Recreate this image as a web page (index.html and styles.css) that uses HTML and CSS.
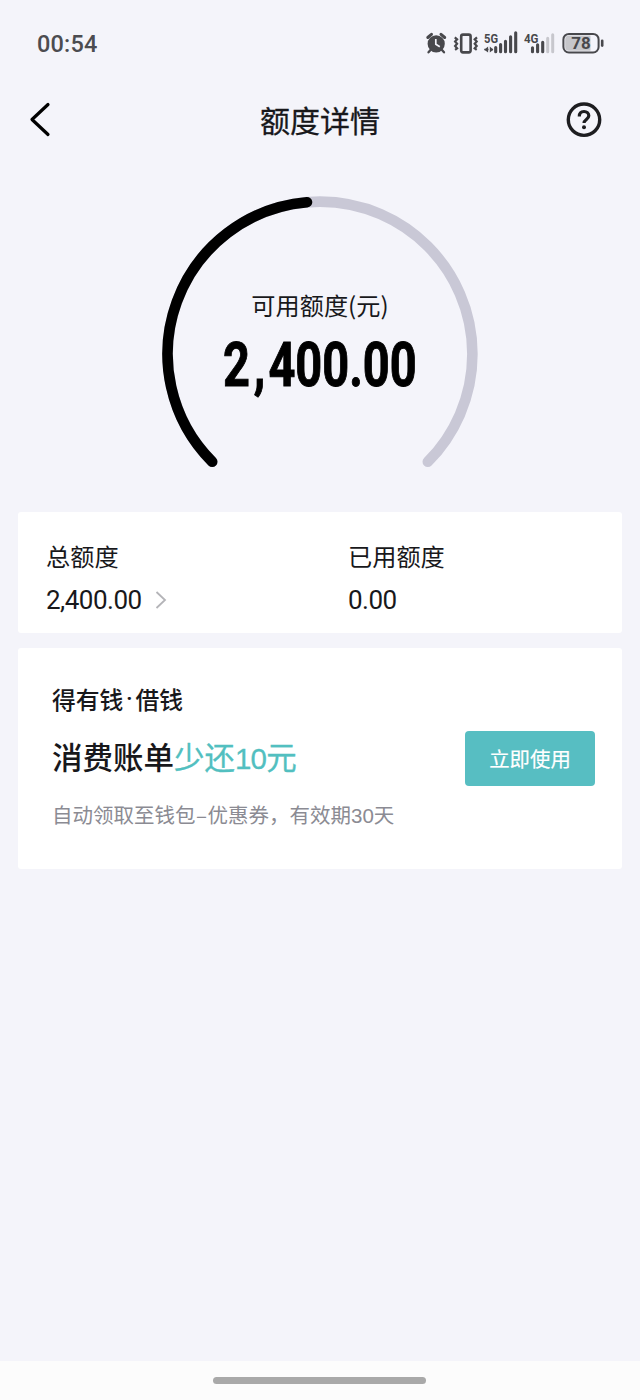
FILE: index.html
```html
<!DOCTYPE html>
<html lang="zh-CN">
<head>
<meta charset="utf-8">
<title>额度详情</title>
<link rel="stylesheet" href="styles.css">
</head>
<body>
<div class="screen">
  <div class="status">
    <span class="clock">00:54</span>
    <svg class="status-icons" width="184" height="28" viewBox="424 29 184 28" fill="none" stroke="#48484c">
      <circle cx="436.200" cy="43.800" r="8.600" fill="#48484c" stroke="none"/>
      <path d="M427.800 37.500l3.700-3.200M444.700 37.500l-3.700-3.200" stroke-width="3" stroke-linecap="round"/>
      <path d="M430.500 50l-2 2.300M442 50l2 2.300" stroke-width="2.300" stroke-linecap="round"/>
      <path d="M435.800 39v5.200l4 2.500" stroke="#f4f4fb" stroke-width="1.700"/>
      <rect x="461.200" y="34.600" width="9.400" height="17.800" rx="1.800" stroke-width="2.600"/>
      <path d="M454.800 37.300l2.300 2-2 2.200 2 2.300-2 2.300 2 2.200-2 1.500M477 37.300l-2.300 2 2 2.200-2 2.300 2 2.300-2 2.200 2 1.500" stroke-width="2.200"/>
      <text class="net" x="484" y="42.500" textLength="14" lengthAdjust="spacingAndGlyphs">5G</text>
      <path d="M484.300 49.500h4.200M490 49.500h3" stroke-width="1.500"/>
      <path d="M484.300 49.700l3.800-3.200v6zM493.300 49.700l-3.500-3.200v6z" fill="#48484c" stroke="none"/>
      <path d="M495.700 52.300v-4.300M500.600 52.300v-7.300M505.500 52.300v-10.500M510.600 52.300v-15M515.700 52.300v-19" stroke-width="3.100" stroke-linecap="round" transform="translate(0 -.5)"/>
      <text class="net" x="524" y="42.500" textLength="14.500" lengthAdjust="spacingAndGlyphs">4G</text>
      <path d="M532.500 51.800v-4M537.600 51.800v-7M542.700 51.800v-9.500" stroke-width="3.100" stroke-linecap="round"/>
      <path d="M547.700 51.800v-13.500M552.700 51.800v-17" stroke="#c7c7cd" stroke-width="3" stroke-linecap="round"/>
      <rect x="563.400" y="33.900" width="35.200" height="18.600" rx="5.500" fill="#f4f4fb" stroke-width="2"/>
      <path d="M569 35.600h21.500v15.200h-21.500a3.800 3.800 0 0 1-3.800-3.800v-7.600a3.800 3.800 0 0 1 3.800-3.800z" fill="#c6c6ca" stroke="none"/>
      <path d="M602.200 40.800v4.800" stroke-width="2.600" stroke-linecap="round"/>
      <text class="battery" x="571.300" y="49.400" textLength="19.500" lengthAdjust="spacingAndGlyphs">78</text>
    </svg>
  </div>
  <header class="nav">
    <svg width="24" height="38" viewBox="0 0 24 38" fill="none" stroke="#000" stroke-width="3.200" stroke-linecap="round" stroke-linejoin="round"><path d="M20 3.500L4 18.500l16 15"/></svg>
    <h1 class="title">额度详情</h1>
    <svg width="38" height="38" viewBox="0 0 38 38" fill="none" stroke="#1d1d20"><circle cx="19" cy="18.700" r="15.700" stroke-width="3.400"/><path d="M14.300 15.500c0-3.300 1.900-5 4.700-5s4.800 1.600 4.800 4.200c0 3.500-4.800 3.900-4.800 7.300" stroke-width="3.200"/><circle cx="19" cy="26.200" r="2" fill="#1d1d20" stroke="none"/></svg>
  </header>
  <section class="gauge">
    <svg class="dial" width="320" height="280" viewBox="160 194 320 280" fill="none" stroke-width="10.600" stroke-linecap="round">
      <path d="M212.200 461.800A152.400 152.400 0 1 1 427.800 461.800" stroke="#c9c8d6"/>
      <path d="M212.200 461.800A152.400 152.400 0 0 1 307 202.200" stroke="#000"/>
    </svg>
    <div class="reading">
      <span class="label">可用额度(元)</span>
      <strong class="amount">2<span class="comma">,</span>400.00</strong>
    </div>
  </section>
  <section class="card totals">
    <div class="total">
      <div class="label">总额度</div>
      <div class="value"><span>2,400.00</span><svg width="12" height="20" viewBox="0 0 12 20" fill="none" stroke="#b4b4b8" stroke-width="1.800"><path d="M1.500 2l8.500 8-8.500 8"/></svg></div>
    </div>
    <div class="total">
      <div class="label">已用额度</div>
      <div class="value"><span>0.00</span></div>
    </div>
  </section>
  <section class="card promo">
    <div class="brand">得有钱<span class="dot">·</span>借钱</div>
    <div class="offer">
      <div class="headline">消费账单<span class="accent">少还<span class="ten">10</span>元</span></div>
      <button class="use">立即使用</button>
    </div>
    <div class="note">自动领取至钱包<span class="dash">–</span>优惠券，有效期<span class="days">30</span>天</div>
  </section>
  <footer class="home"><div class="handle"></div></footer>
</div>
</body>
</html>
```
FILE: styles.css
```css
* { box-sizing: border-box; }
body { margin: 0; background: #f4f4fa; font-family: "Noto Sans CJK SC", sans-serif; color: #18181b; }
.screen { width: 640px; height: 1400px; display: flex; flex-direction: column; }
.status { height: 86px; padding: 0 32px 0 37px; display: flex; align-items: center; justify-content: space-between; }
.clock { font: 500 23.5px/28px Roboto, sans-serif; letter-spacing: .2px; color: #4c4c50; padding-top: 1px; }
.net { font: 700 12px Roboto, sans-serif; fill: #48484c; stroke: none; }
.battery { font: 700 17px Roboto, sans-serif; fill: #48484c; stroke: none; }
.nav { height: 68px; padding: 0 37px 0 28px; display: flex; align-items: center; justify-content: space-between; }
.title { margin: 0 0 3px 23px; font-size: 30px; font-weight: 400; line-height: 44px; -webkit-text-stroke: .3px #18181b; }
.gauge { height: 358px; padding-top: 40px; display: grid; justify-items: center; align-items: start; }
.dial, .reading { grid-area: 1 / 1; }
.reading { display: flex; flex-direction: column; align-items: center; padding-top: 93px; }
.gauge .label { font-size: 24.200px; line-height: 36px; font-weight: 400; }
.amount { font: 700 61px/72px Roboto, sans-serif; color: #000; transform: scaleX(.77); margin-top: 6px; white-space: nowrap; -webkit-text-stroke: 1px #000; }
.comma { margin: 0 4px 0 5px; }
.card { margin: 0 18px; background: #fff; border-radius: 3px; }
.totals { height: 121px; padding: 26px 28px 0; display: grid; grid-template-columns: 302px 1fr; }
.totals .label { font-size: 24.200px; line-height: 36px; }
.value { display: flex; align-items: center; gap: 13px; margin-top: 11px; font: 400 26px/30px Roboto, sans-serif; letter-spacing: -.5px; }
.promo { margin-top: 15px; height: 221px; padding: 33px 27px 0 34px; }
.brand { display: flex; font-size: 23.800px; line-height: 36px; font-weight: 500; }
.dot { width: 12px; text-align: center; font-family: Roboto, sans-serif; }
.offer { display: flex; justify-content: space-between; align-items: center; margin-top: 14px; }
.headline { font-size: 30.500px; line-height: 46px; font-weight: 500; padding-bottom: 2px; }
.accent { color: #52bfc0; font-weight: 400; -webkit-text-stroke: .3px #52bfc0; }
.ten { font-family: "Liberation Sans", sans-serif; font-size: 29.500px; letter-spacing: -.8px; }
.use { width: 130px; height: 55px; padding: 0 0 2px; border: 0; border-radius: 4px; background: #57bec2; color: #fff; font: 400 20.400px/30px "Noto Sans CJK SC", sans-serif; -webkit-text-stroke: .2px #fff; }
.note { margin-top: 13px; font-size: 20.500px; line-height: 30px; color: #8b8b93; white-space: nowrap; }
.dash { display: inline-block; width: 12px; text-align: center; }
.days { font-family: "Liberation Sans", sans-serif; }
.home { margin-top: auto; height: 39px; background: #fcfcfc; display: flex; justify-content: center; padding: 16px 1px 0 0; }
.handle { width: 213px; height: 7px; border-radius: 4px; background: #a9a9a9; }
```
